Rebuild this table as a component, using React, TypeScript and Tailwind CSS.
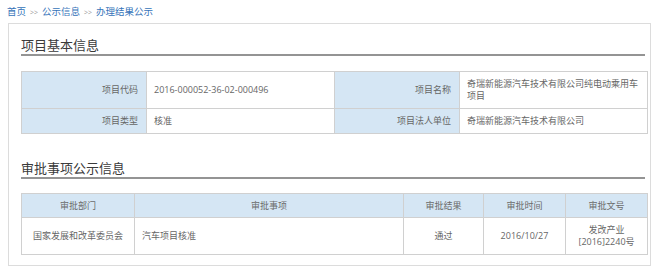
import React from "react";

const font = { fontFamily: '"Open Sans", "Noto Sans CJK SC", sans-serif' };

function SectionTitle({ children }: { children: React.ReactNode }) {
  return (
    <div className="mr-[5px] border-b-2 border-[#949494] text-[13px] leading-[17px] text-[#3a3a3a]">
      {children}
    </div>
  );
}

export default function App() {
  const cell = "border border-[#d0d0d0] px-[7px] align-middle";
  const label = `${cell} bg-[#d5e6f4] text-right pr-[8px]`;

  return (
    <div className="w-[660px] h-[267px] bg-white text-[9px] leading-[12px] text-[#666]" style={font}>
      {/* Breadcrumb */}
      <div className="h-[23px] pl-[7px] pt-[6px] text-[9.5px] text-[#3573b9]">
        <span>首页</span>
        <span className="mx-[4px] text-[7px] text-[#999]">&gt;&gt;</span>
        <span>公示信息</span>
        <span className="mx-[4px] text-[7px] text-[#999]">&gt;&gt;</span>
        <span>办理结果公示</span>
      </div>

      <div className="ml-[8px] w-[643px] h-[243px] border border-[#dcdcdc] pl-[12px] pt-[13px]">
        <SectionTitle>项目基本信息</SectionTitle>

        <table className="mt-[15px] w-[626px] border-collapse table-fixed">
          <colgroup>
            <col className="w-[125px]" />
            <col className="w-[188px]" />
            <col className="w-[125px]" />
            <col className="w-[188px]" />
          </colgroup>
          <tbody>
            <tr className="h-[37px]">
              <td className={label}>项目代码</td>
              <td className={cell}>2016-000052-36-02-000496</td>
              <td className={label}>项目名称</td>
              <td className={cell}>奇瑞新能源汽车技术有限公司纯电动乘用车项目</td>
            </tr>
            <tr className="h-[25px]">
              <td className={label}>项目类型</td>
              <td className={cell}>核准</td>
              <td className={label}>项目法人单位</td>
              <td className={cell}>奇瑞新能源汽车技术有限公司</td>
            </tr>
          </tbody>
        </table>

        <div className="mt-[26px]">
          <SectionTitle>审批事项公示信息</SectionTitle>
        </div>

        <table className="mt-[14px] w-[626px] border-collapse table-fixed">
          <colgroup>
            <col className="w-[113px]" />
            <col className="w-[269px]" />
            <col className="w-[80px]" />
            <col className="w-[82px]" />
            <col className="w-[82px]" />
          </colgroup>
          <thead>
            <tr className="h-[24px] bg-[#d5e6f4] text-[#6b6b6b]">
              <th className={`${cell} font-normal text-center`}>审批部门</th>
              <th className={`${cell} font-normal text-center`}>审批事项</th>
              <th className={`${cell} font-normal text-center`}>审批结果</th>
              <th className={`${cell} font-normal text-center`}>审批时间</th>
              <th className={`${cell} font-normal text-center`}>审批文号</th>
            </tr>
          </thead>
          <tbody>
            <tr className="h-[37px]">
              <td className={`${cell} text-center`}>国家发展和改革委员会</td>
              <td className={cell}>汽车项目核准</td>
              <td className={`${cell} text-center`}>通过</td>
              <td className={`${cell} text-center`}>2016/10/27</td>
              <td className={`${cell} text-center`}>
                发改产业
                <br />
                [2016]2240号
              </td>
            </tr>
          </tbody>
        </table>
      </div>
    </div>
  );
}
